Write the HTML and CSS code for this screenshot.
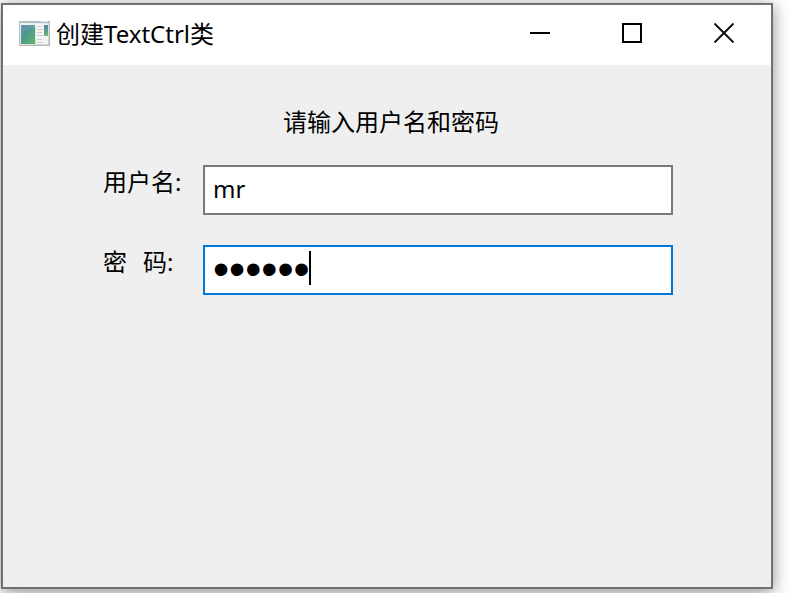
FILE: index.html
```
<!DOCTYPE html>
<html lang="zh-CN">

<head>
    <meta charset="UTF-8">
    <meta name="viewport" content="width=device-width, initial-scale=1.0">
    <title>创建TextCtrl类</title>
    <link rel="stylesheet" href="styles.css">
</head>

<body>

    <div class="window">
        <header class="titlebar">
            <svg class="app-icon" width="32" height="26" viewBox="0 0 32 26" aria-hidden="true">
                <defs>
                    <linearGradient id="frame" x1="0" y1="0" x2="1" y2="1">
                        <stop offset="0" stop-color="#fafafa"/>
                        <stop offset="1" stop-color="#cfcfcf"/>
                    </linearGradient>
                    <linearGradient id="pane" x1="0" y1="0" x2="1" y2="1">
                        <stop offset="0" stop-color="#4a7fa5"/>
                        <stop offset="0.5" stop-color="#4f9d8c"/>
                        <stop offset="1" stop-color="#62b565"/>
                    </linearGradient>
                    <linearGradient id="strip" x1="0" y1="0" x2="0" y2="1">
                        <stop offset="0" stop-color="#4a7fa5"/>
                        <stop offset="1" stop-color="#6cb878"/>
                    </linearGradient>
                </defs>
                <rect x="0.5" y="0.5" width="30" height="24" fill="url(#frame)" stroke="#b4b8b8"/>
                <rect x="1" y="0" width="29" height="2" fill="#b3bfc7"/>
                <rect x="22" y="0" width="7" height="1" fill="#dfe6ea"/>
                <rect x="2" y="4" width="14" height="19" fill="url(#pane)"/>
                <path d="M2 15Q5 8 16 7V4H2Z" fill="#7fb3c4" opacity="0.35"/>
                <rect x="17" y="3" width="12" height="20" fill="#f4f4f4"/>
                <path d="M18 5.5h5M18 8.5h6M18 11.5h5M18 14.5h6M18 18.5h5M18 21.5h6" stroke="#c9cdcd"/>
                <rect x="25" y="4" width="4" height="11" fill="url(#strip)"/>
            </svg>
            <h1 class="title">创建TextCtrl类</h1>
            <div class="window-buttons">
                <button type="button" aria-label="最小化">
                    <svg width="20" height="20" viewBox="0 0 20 20"><path d="M0 10h20" stroke="#000" stroke-width="2"/></svg>
                </button>
                <button type="button" aria-label="最大化">
                    <svg width="20" height="20" viewBox="0 0 20 20"><rect x="1" y="1" width="18" height="18" fill="none" stroke="#000" stroke-width="2"/></svg>
                </button>
                <button type="button" aria-label="关闭">
                    <svg width="20" height="20" viewBox="0 0 20 20"><path d="M0.5 0.5l19 19M19.5 0.5l-19 19" stroke="#111" stroke-width="2"/></svg>
                </button>
            </div>
        </header>

        <form class="login-form">
            <p class="hint">请输入用户名和密码</p>
            <div class="row">
                <label for="username">用户名:</label>
                <div class="field">
                    <input type="text" id="username" name="username" value="mr">
                </div>
            </div>
            <div class="row">
                <label for="password">密&emsp13;&emsp13;码:</label>
                <div class="field active">
                    <input type="password" id="password" name="password" value="mrsoft">
                    <span class="caret"></span>
                </div>
            </div>
        </form>
    </div>

</body>

</html>
```
FILE: styles.css
```
* {
    box-sizing: border-box;
}

body {
    margin: 0;
    padding: 3px 39px 4px 1px;
    height: 100vh;
    display: flex;
    background: #fff;
    color: #000;
    font-family: "Noto Sans", "Noto Sans CJK SC", sans-serif;
    font-size: 24px;
    line-height: 34px;
    overflow: hidden;
}

.window {
    flex: 1;
    display: flex;
    flex-direction: column;
    border: 2px solid #707070;
    background: #efefef;
    box-shadow: 0 3px 16px rgba(0, 0, 0, 0.45);
}

.titlebar {
    display: flex;
    align-items: center;
    height: 60px;
    padding: 0 1px 2px 16px;
    background: #fff;
}

.title {
    margin: 0 0 0 5px;
    font-size: 24px;
    font-weight: normal;
}

.window-buttons {
    display: flex;
    align-self: stretch;
    margin-left: auto;
}

.window-buttons button {
    display: flex;
    align-items: center;
    justify-content: center;
    width: 92px;
    padding: 0 0 2px;
    border: none;
    background: none;
}

.login-form {
    display: flex;
    flex-direction: column;
    gap: 30px;
    padding: 40px 98px 40px 100px;
}

.hint {
    margin: 0 0 -4px;
    padding-left: 6px;
    text-align: center;
}

.row {
    display: grid;
    grid-template-columns: 100px 1fr;
}

.field {
    position: relative;
}

.field input {
    display: block;
    width: 100%;
    height: 50px;
    padding: 0 8px 4px;
    border: 2px solid #7a7a7a;
    border-radius: 0;
    outline: none;
    background: #fff;
    color: #000;
    font-family: inherit;
    font-size: 24px;
}

.field.active input {
    border-color: #0078d7;
}

.field input[type="password"] {
    padding-bottom: 2px;
    font-family: "Liberation Sans", sans-serif;
    font-size: 46px;
}

.caret {
    position: absolute;
    left: 106px;
    top: 6px;
    width: 2px;
    height: 34px;
    background: #000;
}
```
